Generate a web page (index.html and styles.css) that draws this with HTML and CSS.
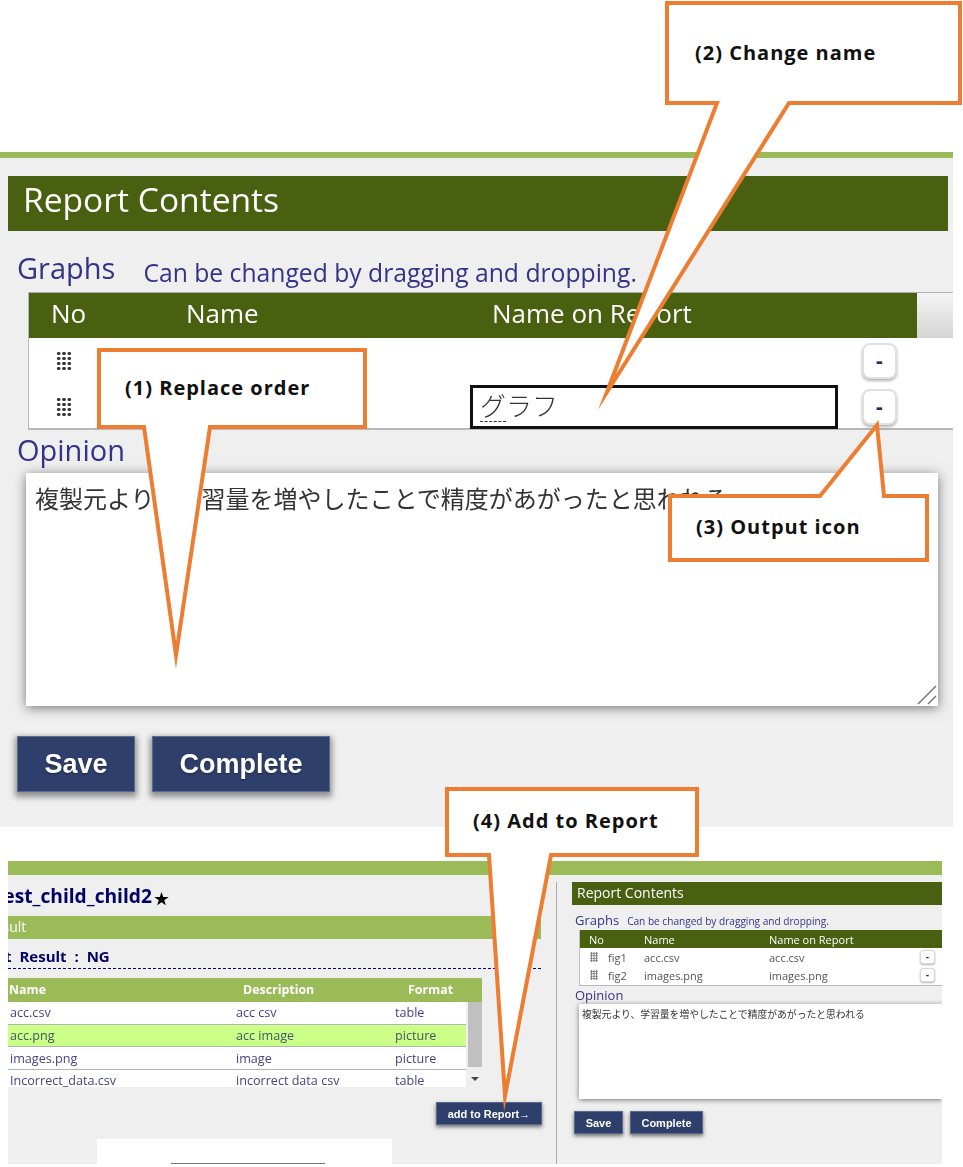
FILE: index.html
```html
<!DOCTYPE html>
<html>
<head>
<meta charset="utf-8">
<title>Report Contents</title>
<link rel="stylesheet" href="styles.css">
</head>
<body>

<!-- large view of the report panel -->
<div class="big-panel">
  <div class="big-bar"></div>
  <div class="big-title">Report Contents</div>
  <div class="big-graphs">
    <span class="big-label">Graphs</span>
    <span class="big-note">Can be changed by dragging and dropping.</span>
  </div>
  <div class="big-table">
    <div class="big-head">
      <div class="big-head-cells">
        <span class="big-col-no">No</span>
        <span class="big-col-name">Name</span>
        <span>Name on Report</span>
      </div>
      <div class="big-head-end"></div>
    </div>
    <div class="big-row">
      <div class="grip"></div>
      <div></div>
      <button class="minus big-minus">-</button>
    </div>
    <div class="big-row">
      <div class="grip"></div>
      <div class="big-input"><span class="ime">グ</span>ラフ</div>
      <button class="minus big-minus">-</button>
    </div>
  </div>
  <div class="big-label big-opinion">Opinion</div>
  <div class="big-text">
    複製元より、学習量を増やしたことで精度があがったと思われる
    <svg class="resize" width="20" height="20" viewBox="0 0 20 20"><path d="M1 19L19 1M11 19L19 11" stroke="#777" stroke-width="1.5" fill="none"/></svg>
  </div>
  <div class="big-buttons">
    <button class="big-btn big-save">Save</button>
    <button class="big-btn big-complete">Complete</button>
  </div>
</div>

<!-- small view: result list on the left, report on the right -->
<div class="small-panel">
  <div class="small-bar"></div>
  <div class="small-body">
    <div class="left-col">
      <div class="task-title">test_child_child2<span class="star">★</span></div>
      <div class="result-bar">Result</div>
      <div class="test-result">Test Result : NG</div>
      <table class="files">
        <tr class="files-head"><th class="c1">Name</th><th class="c2">Description</th><th class="c3">Format</th></tr>
      </table>
      <div class="files-scroll">
        <table class="files files-rows">
          <tr><td class="c1">acc.csv</td><td class="c2">acc csv</td><td class="c3">table</td></tr>
          <tr class="picked"><td class="c1">acc.png</td><td class="c2">acc image</td><td class="c3">picture</td></tr>
          <tr><td class="c1">images.png</td><td class="c2">image</td><td class="c3">picture</td></tr>
          <tr><td class="c1">Incorrect_data.csv</td><td class="c2">incorrect data csv</td><td class="c3">table</td></tr>
        </table>
        <div class="scrollbar"><div class="thumb"></div><div class="arrow"></div></div>
      </div>
      <div class="add-line"><button class="small-btn add-btn">add to Report→</button></div>
      <div class="preview"><div class="preview-line"></div></div>
    </div>

    <div class="right-col">
      <div class="small-title">Report Contents</div>
      <div class="small-graphs">
        <span class="small-label">Graphs</span>
        <span class="small-note">Can be changed by dragging and dropping.</span>
      </div>
      <div class="small-table">
        <div class="small-head"><span>No</span><span>Name</span><span>Name on Report</span></div>
        <div class="small-row">
          <div class="grip grip-small"></div><span>fig1</span><span>acc.csv</span><span>acc.csv</span><button class="minus small-minus">-</button>
        </div>
        <div class="small-row">
          <div class="grip grip-small"></div><span>fig2</span><span>images.png</span><span>images.png</span><button class="minus small-minus">-</button>
        </div>
      </div>
      <div class="small-label small-opinion">Opinion</div>
      <div class="small-text">複製元より、学習量を増やしたことで精度があがったと思われる</div>
      <div class="small-buttons">
        <button class="small-btn small-save">Save</button>
        <button class="small-btn small-complete">Complete</button>
      </div>
    </div>
  </div>
</div>

<!-- speech balloons drawn over both views -->
<svg class="callouts" width="963" height="1167" viewBox="0 0 963 1167">
  <polygon class="balloon" points="99,350 365,350 365,427 210,427 176,655 144,427 99,427"/>
  <polygon class="balloon" points="667,3 960,3 960,103 789,103 607,392 717,103 667,103"/>
  <polygon class="balloon" points="670,496 820,496 877,425 884,496 927,496 927,560 670,560"/>
  <polygon class="balloon" points="447,789 697,789 697,855 551,855 505,1096 489,855 447,855"/>
  <text class="balloon-text" x="125" y="395">(1) Replace order</text>
  <text class="balloon-text" x="695" y="60">(2) Change name</text>
  <text class="balloon-text" x="696" y="534">(3) Output icon</text>
  <text class="balloon-text" x="473" y="828">(4) Add to Report</text>
</svg>

</body>
</html>
```

FILE: styles.css
```css
html, body
{
  margin:0;
  padding:0;
  background-color:#FFFFFF;
}

body
{
  width:963px;
  height:1167px;
  position:relative;
  overflow:hidden;
  padding-top:152px;
  box-sizing:border-box;
  font-family:"Open Sans","Noto Sans CJK JP",sans-serif;
}

button
{
  padding:0;
  cursor:pointer;
}

/* shared bits */

.grip
{
  width:16px;
  height:20px;
  background-image:radial-gradient(circle, #333333 1.4px, transparent 2px);
  background-size:5.33px 5px;
}

.grip-small
{
  width:8px;
  height:10px;
  background-image:radial-gradient(circle, #666666 .8px, transparent 1.2px);
  background-size:2.67px 2.5px;
}

.minus
{
  background-color:#FFFFFF;
  border:1px solid #D8D8D8;
  color:#1F2F6B;
  font-family:"Liberation Sans",sans-serif;
  font-weight:bold;
}

/* large view */

.big-panel
{
  width:953px;
  height:675px;
  background-color:#EFEFEF;
  filter:blur(.4px);
}

.big-bar
{
  height:6px;
  background-color:#9BBB59;
}

.big-title
{
  margin:18px 5px 0 8px;
  height:55px;
  line-height:47px;
  padding-left:15px;
  background-color:#486010;
  color:#FFFFFF;
  font-size:33.6px;
}

.big-graphs
{
  display:flex;
  align-items:flex-start;
  gap:28px;
  margin:17px 0 0 17px;
  height:44px;
}

.big-label
{
  color:#333388;
  font-size:29px;
}

.big-note
{
  margin-top:8px;
  color:#333388;
  font-size:24.7px;
}

.big-table
{
  margin-left:28px;
  height:138px;
  box-sizing:border-box;
  background-color:#FFFFFF;
  border-top:1px solid #B0B0B0;
  border-bottom:2px solid #B8B8B8;
  border-left:1px solid #B8B8B8;
}

.big-head
{
  display:flex;
  height:45px;
}

.big-head-cells
{
  display:flex;
  align-items:center;
  width:888px;
  padding:0 0 6px 22px;
  box-sizing:border-box;
  background-color:#486010;
  color:#FFFFFF;
  font-size:26px;
}

.big-col-no
{
  width:135px;
}

.big-col-name
{
  width:306px;
}

.big-head-end
{
  flex:1;
  background:linear-gradient(#F4F4F4, #D4D4D4);
}

.big-row
{
  display:grid;
  grid-template-columns:414px 392px 35px;
  align-items:center;
  height:46px;
  padding-left:27px;
}

.big-input
{
  width:368px;
  height:44px;
  box-sizing:border-box;
  border:3px solid #111111;
  padding-left:7px;
  font-size:26px;
  line-height:36px;
  font-weight:300;
  color:#333333;
}

.ime
{
  text-decoration:underline dashed 1px;
  text-underline-offset:5px;
}

.big-minus
{
  width:35px;
  height:36px;
  border-radius:8px;
  border:2px solid #E0E0E0;
  box-shadow:0 2px 3px rgba(0,0,0,.3);
  font-size:22px;
}

.big-opinion
{
  margin:1px 0 0 17px;
  height:42px;
  line-height:38px;
  display:block;
}

.big-text
{
  position:relative;
  margin-left:26px;
  width:912px;
  height:233px;
  box-sizing:border-box;
  padding:10px 9px;
  background-color:#FFFFFF;
  box-shadow:0 2px 11px rgba(0,0,0,.5);
  color:#333333;
  font-size:24px;
  line-height:32px;
}

.resize
{
  position:absolute;
  right:1px;
  bottom:1px;
}

.big-buttons
{
  display:flex;
  gap:17px;
  margin:30px 0 0 17px;
}

.big-btn
{
  height:56px;
  border:1px solid #5A6A8A;
  background-color:#2F3F6B;
  color:#FFFFFF;
  font-family:"Liberation Sans",sans-serif;
  font-weight:bold;
  font-size:27px;
  box-shadow:0 3px 6px 2px rgba(0,0,0,.4);
  text-shadow:0 1px 2px rgba(0,0,0,.4);
}

.big-save
{
  width:118px;
}

.big-complete
{
  width:178px;
}

/* small view */

.small-panel
{
  width:934px;
  height:303px;
  margin:34px 0 0 8px;
  background-color:#EFEFEF;
  overflow:hidden;
  filter:blur(.3px);
}

.small-bar
{
  height:14px;
  background-color:#9BBB59;
}

.small-body
{
  display:flex;
  height:289px;
}

.left-col
{
  width:549px;
  overflow:hidden;
  box-sizing:border-box;
  border-right:1px solid #AAAAAA;
  margin-top:7px;
}

.task-title
{
  margin:0 0 0 -13px;
  height:27px;
  line-height:26px;
  color:#000066;
  font-size:19.2px;
  font-weight:700;
  white-space:nowrap;
  display:flex;
  align-items:center;
}

.star
{
  color:#000000;
  font-size:15px;
  margin:5px 0 0 2px;
}

.result-bar
{
  margin-top:7px;
  width:533px;
  height:23px;
  line-height:21px;
  background-color:#9BBB59;
  color:#FFFFFF;
  font-size:14px;
  text-indent:-22px;
}

.test-result
{
  margin-top:6px;
  width:533px;
  height:24px;
  box-sizing:border-box;
  border-bottom:1px dashed #000080;
  color:#000066;
  font-size:15px;
  font-weight:700;
  line-height:22px;
  word-spacing:4px;
  text-indent:-28px;
  white-space:nowrap;
}

.files
{
  width:474px;
  border-collapse:collapse;
  table-layout:fixed;
  margin-top:9px;
  font-size:12.6px;
}

.files-head
{
  height:24px;
  background-color:#9BBB59;
  color:#FFFFFF;
}

.files th
{
  padding:0 0 2px 0;
  font-weight:700;
  font-size:12.4px;
  text-align:left;
}

.files .c1
{
  width:228px;
}

.files .c2
{
  width:159px;
}

.files th.c1
{
  padding-left:1px;
}

.files th.c2
{
  padding-left:6px;
}

.files th.c3
{
  padding-left:6px;
}

.files-scroll
{
  display:flex;
  width:474px;
  height:85px;
  overflow:hidden;
}

.files-rows
{
  width:458px;
  margin:0;
  color:#444488;
  background-color:#FFFFFF;
  align-self:flex-start;
}

.files-rows .c1
{
  width:226px;
  padding-left:2px;
}

.files-rows td
{
  height:21.7px;
  padding:0;
  border-bottom:1px solid #B4B4B4;
}

.files-rows .picked
{
  background-color:#CCFF88;
  color:#445566;
}

.scrollbar
{
  width:14px;
  margin-left:2px;
}

.thumb
{
  height:65px;
  background-color:#C0C0C0;
}

.arrow
{
  width:0;
  height:0;
  margin:10px 0 0 3px;
  border-left:4px solid transparent;
  border-right:4px solid transparent;
  border-top:4px solid #444444;
}

.add-line
{
  display:flex;
  justify-content:flex-end;
  width:534px;
  margin-top:15px;
}

.small-btn
{
  height:23px;
  border:1px solid #5A6A8A;
  background-color:#2F3F6B;
  color:#FFFFFF;
  font-family:"Liberation Sans",sans-serif;
  font-weight:bold;
  font-size:11px;
  box-shadow:0 2px 4px rgba(0,0,0,.55);
}

.add-btn
{
  width:106px;
}

.preview
{
  width:295px;
  height:25px;
  margin:14px 0 0 89px;
  background-color:#FFFFFF;
  overflow:hidden;
}

.preview-line
{
  margin:24px 0 0 74px;
  width:154px;
  border-top:1px solid #777777;
}

.right-col
{
  flex:1;
  padding:7px 0 0 15px;
  overflow:hidden;
}

.small-title
{
  height:23px;
  line-height:21px;
  padding-left:5px;
  background-color:#486010;
  color:#FFFFFF;
  font-size:14px;
}

.small-graphs
{
  display:flex;
  align-items:baseline;
  gap:8px;
  margin:6px 0 0 3px;
  height:19px;
}

.small-label
{
  color:#333388;
  font-size:13px;
}

.small-note
{
  color:#333388;
  font-size:10.1px;
}

.small-table
{
  margin-left:7px;
  height:56px;
  box-sizing:border-box;
  background-color:#FFFFFF;
  border-left:1px solid #C0C0C0;
  border-bottom:1px solid #B8B8B8;
}

.small-head, .small-row
{
  display:grid;
  align-items:center;
  height:18px;
  font-size:11px;
}

.small-head
{
  grid-template-columns:55px 125px 151px;
  padding-left:9px;
  background-color:#486010;
  color:#FFFFFF;
}

.small-row
{
  grid-template-columns:18px 36px 125px 151px 15px;
  padding-left:10px;
  color:#555555;
}

.small-minus
{
  width:15px;
  height:14px;
  border-radius:3px;
  box-shadow:0 1px 2px rgba(0,0,0,.3);
  font-size:10px;
  line-height:10px;
}

.small-opinion
{
  margin:1px 0 0 3px;
  height:17px;
  line-height:17px;
}

.small-text
{
  margin-left:7px;
  height:95px;
  box-sizing:border-box;
  padding:3px;
  background-color:#FFFFFF;
  box-shadow:0 1px 5px rgba(0,0,0,.5);
  color:#333333;
  font-size:9.8px;
  line-height:15px;
}

.small-buttons
{
  display:flex;
  gap:7px;
  margin:12px 0 0 2px;
}

.small-save
{
  width:49px;
}

.small-complete
{
  width:73px;
}

/* balloons */

.callouts
{
  position:absolute;
  left:0;
  top:0;
}

.balloon
{
  fill:#FFFFFF;
  stroke:#ED7D31;
  stroke-width:4;
  stroke-linejoin:miter;
  stroke-miterlimit:20;
}

.balloon-text
{
  font-family:"Open Sans",sans-serif;
  font-weight:700;
  font-size:20px;
  letter-spacing:1px;
  fill:#111111;
}
```
